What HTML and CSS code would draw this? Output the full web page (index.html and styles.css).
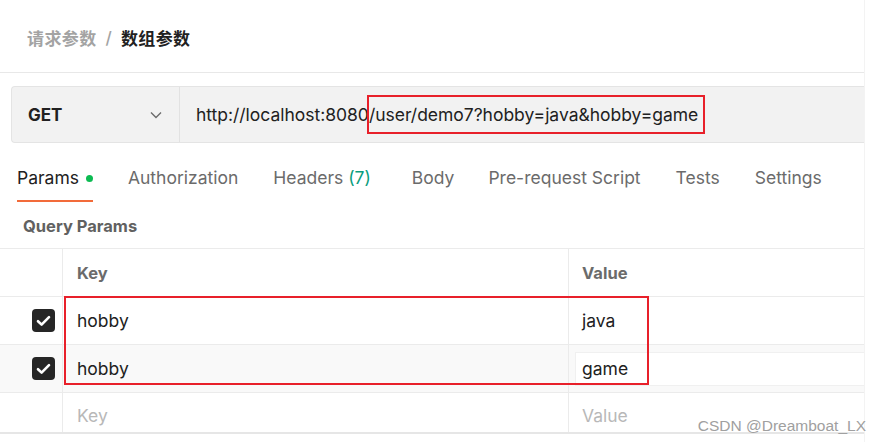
FILE: index.html
```html
<!DOCTYPE html>
<html lang="zh">
<head>
<meta charset="utf-8">
<link rel="stylesheet" href="styles.css">
</head>
<body>
<div class="page">
  <div class="crumbs">
    <span class="crumb-parent">请求参数</span>
    <span class="crumb-sep">/</span>
    <span class="crumb-current">数组参数</span>
  </div>

  <div class="urlbar">
    <div class="method">
      <span class="method-name">GET</span>
      <svg class="chevron" width="12" height="8" viewBox="0 0 12 8"><path d="M1 1.5 L6 6.5 L11 1.5" fill="none" stroke="#6b6b6b" stroke-width="1.4"/></svg>
    </div>
    <div class="url">http://localhost:8080<span class="hl">/user/demo7?hobby=java&amp;hobby=game</span></div>
  </div>

  <div class="tabs">
    <div class="tab active">Params <span class="dot"></span></div>
    <div class="tab">Authorization</div>
    <div class="tab headers">Headers <span class="count">(7)</span></div>
    <div class="tab body">Body</div>
    <div class="tab">Pre-request Script</div>
    <div class="tab">Tests</div>
    <div class="tab">Settings</div>
  </div>

  <div class="section-title">Query Params</div>

  <div class="table">
    <div class="row head">
      <div class="c-check"></div>
      <div class="c-key">Key</div>
      <div class="c-val">Value</div>
    </div>
    <div class="row">
      <div class="c-check"><span class="cb"><svg width="15" height="12" viewBox="0 0 15 12"><path d="M2 6.2 L5.6 9.6 L13 2.2" fill="none" stroke="#fff" stroke-width="2.6" stroke-linecap="round" stroke-linejoin="round"/></svg></span></div>
      <div class="c-key">hobby</div>
      <div class="c-val">java</div>
    </div>
    <div class="row alt">
      <div class="c-check"><span class="cb"><svg width="15" height="12" viewBox="0 0 15 12"><path d="M2 6.2 L5.6 9.6 L13 2.2" fill="none" stroke="#fff" stroke-width="2.6" stroke-linecap="round" stroke-linejoin="round"/></svg></span></div>
      <div class="c-key">hobby</div>
      <div class="c-val"><div class="input">game</div></div>
    </div>
    <div class="row last">
      <div class="c-check"></div>
      <div class="c-key ph">Key</div>
      <div class="c-val ph">Value</div>
    </div>
    <div class="redbox"></div>
  </div>
</div>
<div class="watermark">CSDN @Dreamboat_LX</div>
</body>
</html>
```

FILE: styles.css
```css
html, body {
  margin: 0;
  padding: 0;
  background: #fff;
}
body {
  width: 871px;
  height: 442px;
  overflow: hidden;
  position: relative;
  font-family: Inter, "Noto Sans CJK SC", sans-serif;
  color: #212121;
}
.page {
  width: 864px;
  border-right: 1px solid #f3f3f3;
  height: 442px;
}
.crumbs {
  height: 73px;
  box-sizing: border-box;
  border-bottom: 1px solid #e8e8e8;
  display: flex;
  align-items: center;
  padding: 3px 0 0 27px;
  font-size: 17px;
  font-weight: 600;
  font-family: "Noto Sans CJK SC", sans-serif;
}
.crumb-parent { color: #a3a3a3; letter-spacing: 0.4px; }
.crumb-sep { color: #a3a3a3; margin: 0 9px 0 9px; font-family: Inter, sans-serif; font-weight: 500; }
.crumb-current { color: #212121; letter-spacing: 0.4px; }

.urlbar {
  margin: 13px 0 0 11px;
  height: 57px;
  box-sizing: border-box;
  background: #f2f2f2;
  border: 1px solid #e4e4e4;
  border-right: none;
  border-radius: 4px 0 0 4px;
  display: flex;
  align-items: center;
}
.method {
  width: 168px;
  height: 100%;
  box-sizing: border-box;
  border-right: 1px solid #e2e2e2;
  display: flex;
  align-items: center;
  padding: 0 17px 0 16px;
  justify-content: space-between;
}
.method-name {
  font-weight: 700;
  font-size: 17px;
  color: #212121;
}
.chevron { margin-top: 1px; }
.url {
  padding-left: 16px;
  font-size: 17.5px;
  color: #212121;
  letter-spacing: -0.02px;
}
.hl {
  outline: 2px solid #e8202a;
  outline-offset: 0;
  padding: 7px 5px 7px 0;
}

.tabs {
  display: flex;
  margin-top: 24px;
  padding-left: 17px;
  height: 35px;
  align-items: flex-start;
  font-size: 17.5px;
}
.tab {
  color: #6b6b6b;
  margin-right: 35px;
  line-height: 22px;
}
.tab.headers { margin-right: 41px; }
.tab.body { margin-right: 34px; }
.tab.active {
  color: #212121;
  height: 35px;
  box-sizing: border-box;
  border-bottom: 2px solid #f26b3a;
}
.dot {
  display: inline-block;
  width: 7px;
  height: 7px;
  border-radius: 50%;
  background: #0cbb52;
  vertical-align: middle;
  margin-left: 2px;
  margin-bottom: 2px;
}
.count { color: #0a9d7d; }

.section-title {
  padding-left: 23px;
  height: 47px;
  box-sizing: border-box;
  border-bottom: 1px solid #ebebeb;
  font-size: 16.5px;
  font-weight: 700;
  color: #616161;
  padding-top: 14px;
}

.table {
  position: relative;
}
.row {
  display: flex;
  height: 48px;
  box-sizing: border-box;
  border-bottom: 1px solid #ebebeb;
  font-size: 17.5px;
}
.row.alt { background: #f9f9f9; }
.row.last { height: 41px; border-bottom: 2px solid #e6e6e6; }
.c-check {
  width: 63px;
  box-sizing: border-box;
  border-right: 1px solid #ebebeb;
  display: flex;
  align-items: center;
  justify-content: flex-end;
  padding-right: 7px;
}
.c-key {
  width: 506px;
  box-sizing: border-box;
  border-right: 1px solid #ebebeb;
  padding-left: 14px;
  display: flex;
  align-items: center;
}
.c-val {
  flex: 1;
  padding-left: 13px;
  display: flex;
  align-items: center;
}
.row.head .c-key, .row.head .c-val {
  font-weight: 700;
  color: #6b6b6b;
  font-size: 16.5px;
}
.row.alt .c-val { padding-left: 6px; }
.input {
  background: #fff;
  border: 1px solid #f0f0f0;
  border-right: none;
  height: 34px;
  box-sizing: border-box;
  flex: 1;
  display: flex;
  align-items: center;
  padding-left: 6px;
}
.ph { color: #b8b8b8; padding-top: 5px; }
.cb {
  width: 23px;
  height: 23px;
  border-radius: 4px;
  background: #262626;
  display: flex;
  align-items: center;
  justify-content: center;
}
.redbox {
  position: absolute;
  left: 64px;
  top: 47px;
  width: 585px;
  height: 89px;
  box-sizing: border-box;
  border: 2px solid #e8202a;
  pointer-events: none;
}
.watermark {
  position: absolute;
  right: 5px;
  top: 417px;
  font-family: "Liberation Sans", Arial, sans-serif;
  font-size: 15.5px;
  color: #a0a0a0;
}
```
